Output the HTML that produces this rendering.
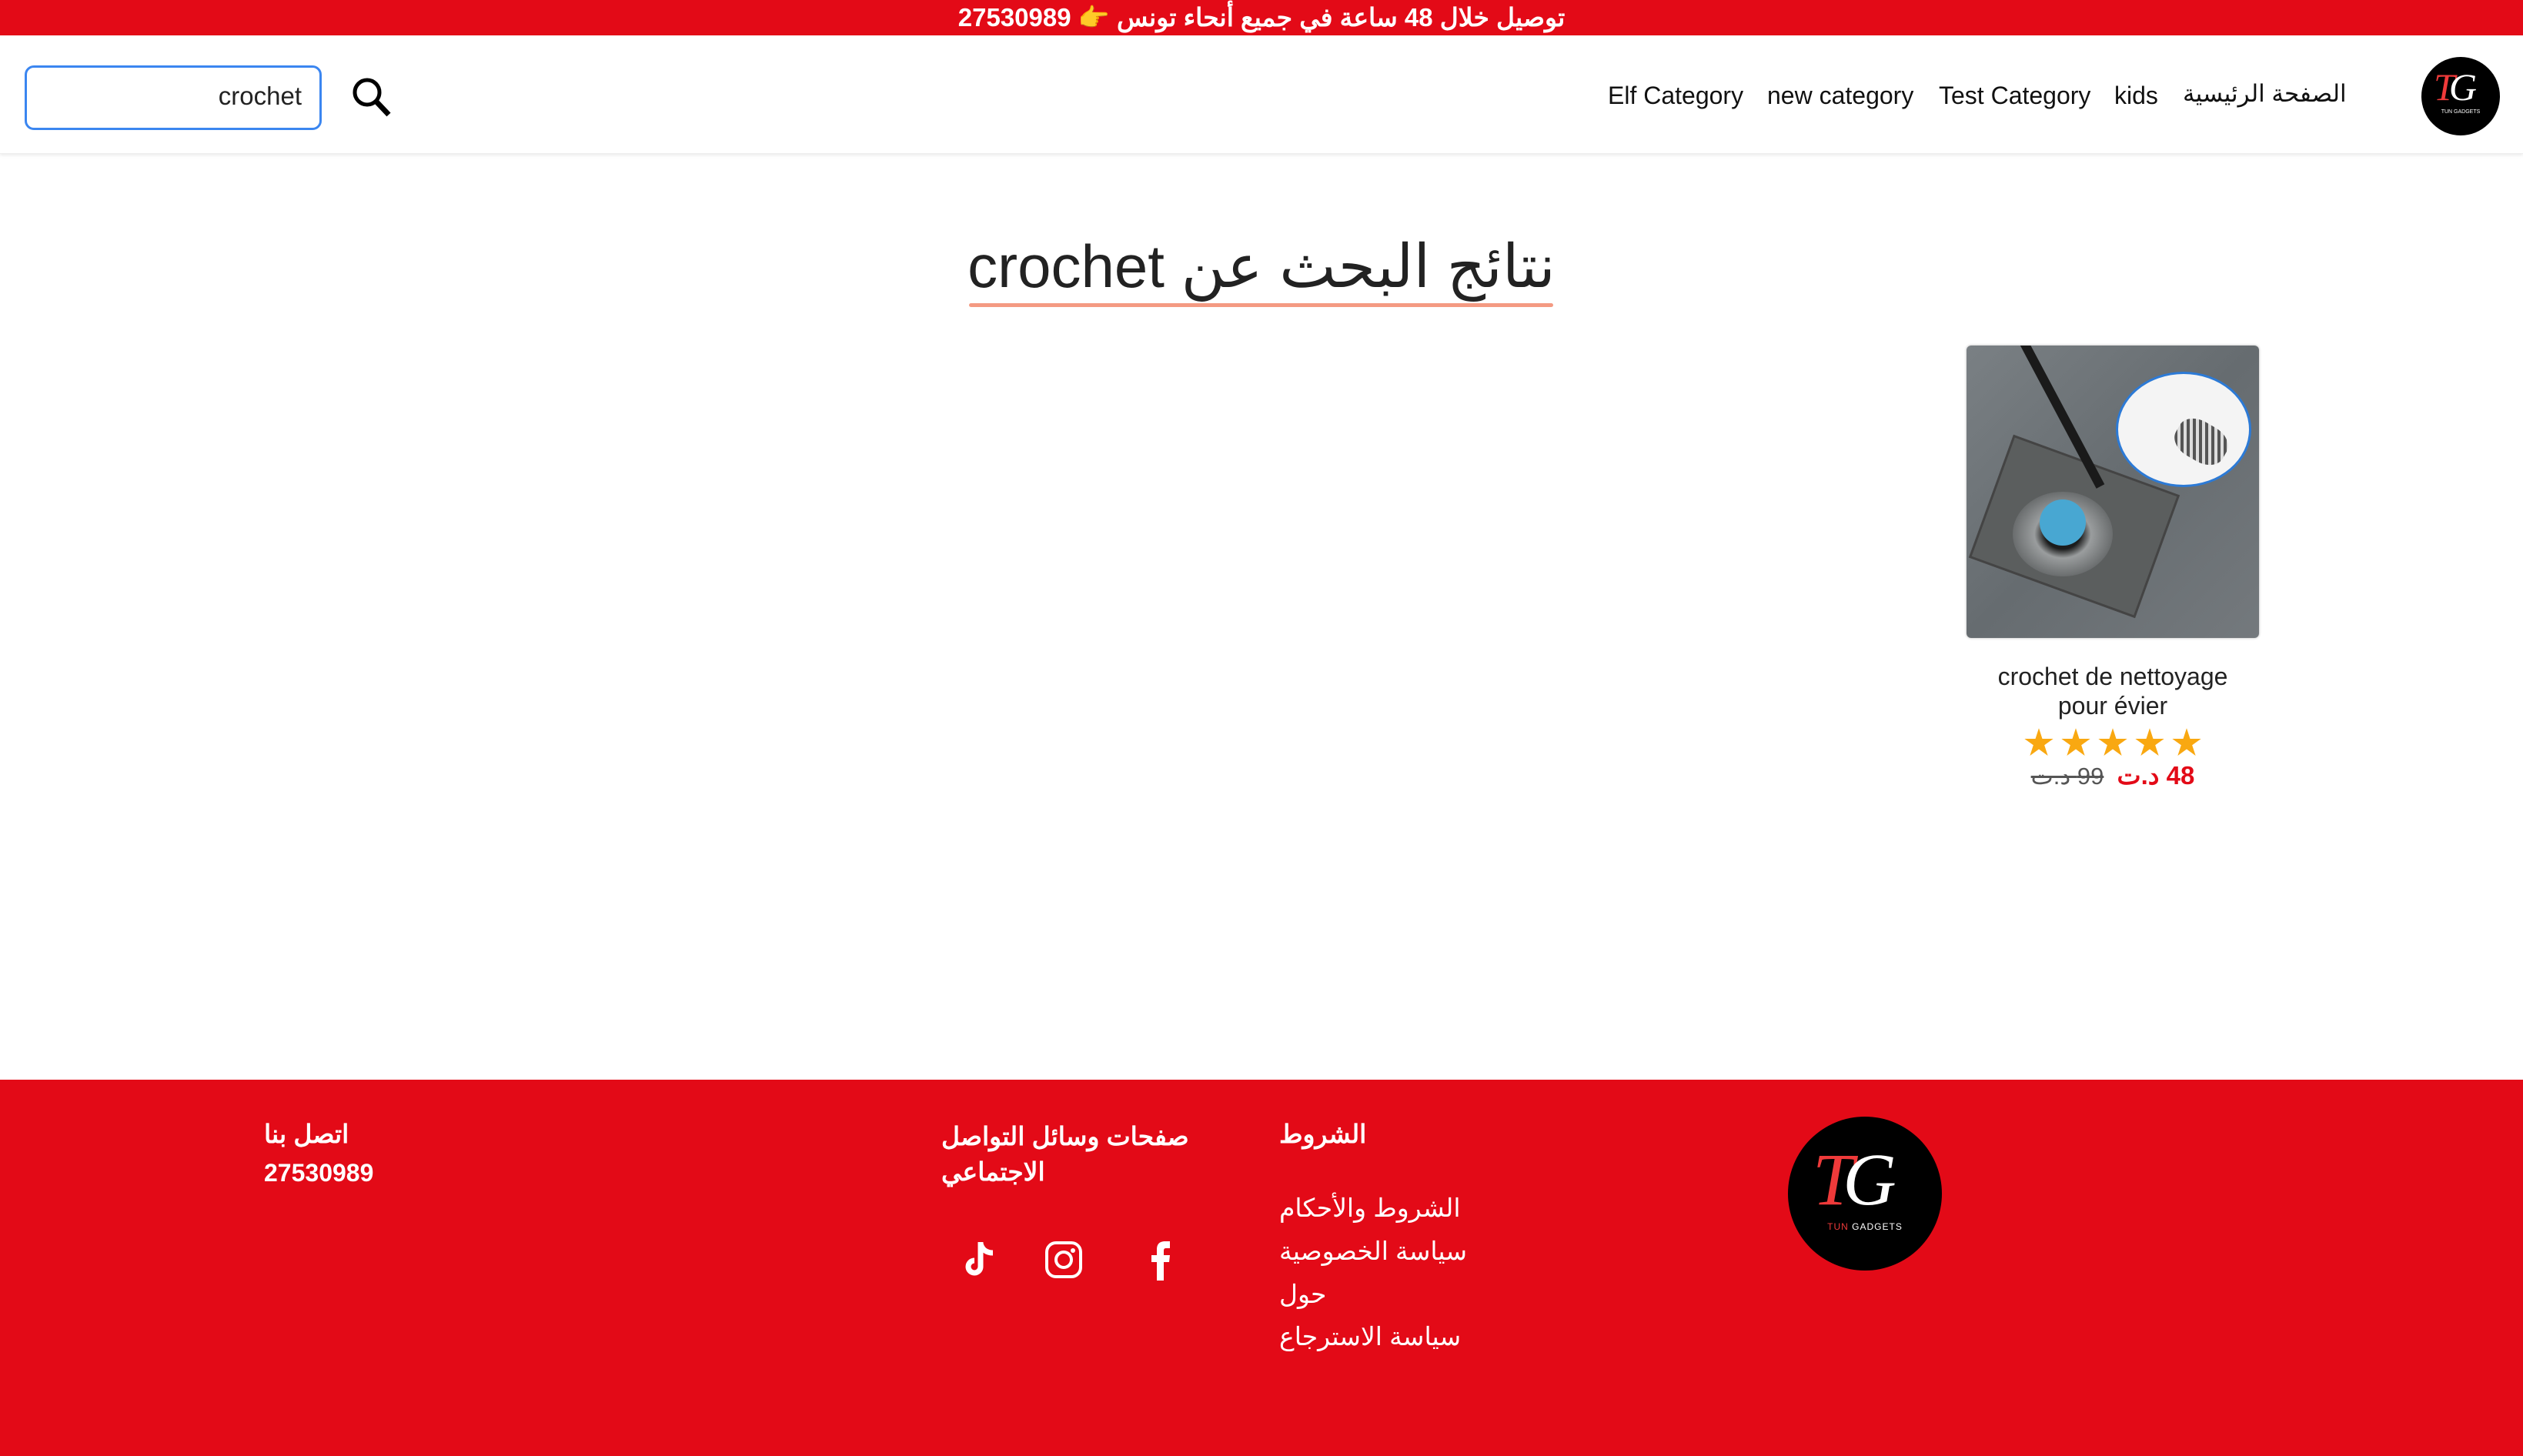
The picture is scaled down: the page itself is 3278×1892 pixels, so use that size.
<!DOCTYPE html>
<html><head><meta charset="utf-8"><style>
*{margin:0;padding:0;box-sizing:border-box}
body{width:3278px;height:1892px;position:relative;background:#fff;font-family:"Liberation Sans","Noto Sans CJK SC",sans-serif;overflow:hidden;color:#222}
.a{position:absolute;white-space:nowrap}
.red{background:#e30a17}
.logo{position:absolute;border-radius:50%;background:#000;overflow:hidden}
</style></head><body>
<div class="a red" style="left:0;top:0;width:3278px;height:46px"></div>
<div class="a" style="left:0;width:3278px;top:2px;text-align:center;color:#fff;font-weight:bold;font-size:33px;line-height:42px" dir="rtl">توصيل خلال 48 ساعة في جميع أنحاء تونس 👉 27530989</div>

<div class="a" style="left:0;top:46px;width:3278px;height:154px;box-shadow:0 2px 4px rgba(0,0,0,0.08);border-bottom:1px solid #eee"></div>
<div class="a" style="left:32px;top:85px;width:386px;height:84px;border:3px solid #3b86f0;border-radius:12px"></div>
<div class="a" style="left:200px;width:192px;text-align:right;top:106px;font-size:33px;color:#222">crochet</div>
<svg class="a" style="left:455px;top:98px" width="56" height="56" viewBox="0 0 56 56"><circle cx="22" cy="22" r="16" fill="none" stroke="#000" stroke-width="5"/><path d="M33 33L50 51" stroke="#000" stroke-width="7"/></svg>

<div class="a" style="left:2089px;top:106px;font-size:32px;color:#111">Elf Category</div>
<div class="a" style="left:2296px;top:106px;font-size:32px;color:#111">new category</div>
<div class="a" style="left:2519px;top:106px;font-size:32px;color:#111">Test Category</div>
<div class="a" style="left:2747px;top:106px;font-size:32px;color:#111">kids</div>
<div class="a" style="left:2836px;top:104px;font-size:31px;color:#111" dir="rtl">الصفحة الرئيسية</div>

<div class="logo" style="left:3146px;top:74px;width:102px;height:102px">
<div class="a" style="left:16px;top:10px;font-family:'Liberation Serif',serif;font-style:italic;font-size:50px;color:#ef3a3a">T<span style="color:#fff;margin-left:-8px">G</span></div>
<div class="a" style="left:0;width:102px;text-align:center;top:68px;font-size:7px;color:#fff">TUN GADGETS</div></div>

<div class="a" style="left:0;width:3278px;top:298px;text-align:center;font-size:78px;color:#222;line-height:96px" dir="rtl">نتائج البحث عن crochet</div>
<div class="a" style="left:1259px;top:394px;width:759px;height:5px;background:#f49a82;border-radius:3px"></div>

<div class="a" style="left:2555px;top:449px;width:380px;height:380px;border-radius:6px;overflow:hidden;background:linear-gradient(135deg,#7a8084,#666c70 50%,#74797d);box-shadow:0 0 3px rgba(0,0,0,.3)">
<div class="a" style="left:25px;top:150px;width:230px;height:170px;background:#5b5e5e;transform:rotate(20deg);border:3px solid #444"></div>
<div class="a" style="left:60px;top:190px;width:130px;height:110px;border-radius:50%;background:radial-gradient(#1b1c1c 25%,#9a9d9e 40%,#6b6e6f 70%)"></div>
<div class="a" style="left:95px;top:200px;width:60px;height:60px;border-radius:50%;background:#48a7d2"></div>
<div class="a" style="left:60px;top:-20px;width:12px;height:230px;background:#1a1a1a;transform:rotate(-28deg);transform-origin:top"></div>
<div class="a" style="left:194px;top:34px;width:176px;height:150px;border-radius:50%;background:#f4f4f4;border:3px solid #2c7ad6"></div>
<div class="a" style="left:270px;top:100px;width:70px;height:50px;border-radius:40%;background:repeating-linear-gradient(60deg,#555 0 4px,#ddd 4px 8px);transform:rotate(30deg)"></div>
</div>
<div class="a" style="left:2555px;width:380px;text-align:center;top:860px;font-size:32px;line-height:38px;color:#222;white-space:normal">crochet de nettoyage<br>pour évier</div>
<div class="a" style="left:2555px;width:380px;text-align:center;top:933px;font-size:40px;color:#f9a811;letter-spacing:8px;padding-left:8px">★★★★★</div>
<div class="a" style="left:2555px;width:380px;text-align:center;top:988px;font-size:31px"><span style="color:#555;text-decoration:line-through" dir="rtl">99 د.ت</span>&nbsp;&nbsp;<span style="color:#e30a17;font-weight:bold;font-size:33px" dir="rtl">48 د.ت</span></div>

<div class="a red" style="left:0;top:1403px;width:3278px;height:489px"></div>
<div class="logo" style="left:2323px;top:1451px;width:200px;height:200px">
<div class="a" style="left:32px;top:26px;font-family:'Liberation Serif',serif;font-style:italic;font-size:96px;color:#ef3a3a">T<span style="color:#fff;margin-left:-14px">G</span></div>
<div class="a" style="left:0;width:200px;text-align:center;top:136px;font-size:12px;color:#fff;letter-spacing:1px"><span style="color:#ef3a3a">TUN</span> GADGETS</div></div>

<div class="a" style="left:1662px;top:1454px;font-size:33px;font-weight:bold;color:#fff" dir="rtl">الشروط</div>
<div class="a" style="left:1662px;top:1550px;font-size:33px;color:#fff" dir="rtl">الشروط والأحكام</div>
<div class="a" style="left:1662px;top:1606px;font-size:33px;color:#fff" dir="rtl">سياسة الخصوصية</div>
<div class="a" style="left:1662px;top:1662px;font-size:33px;color:#fff" dir="rtl">حول</div>
<div class="a" style="left:1662px;top:1717px;font-size:33px;color:#fff" dir="rtl">سياسة الاسترجاع</div>

<div class="a" style="left:1223px;top:1454px;font-size:33px;font-weight:bold;color:#fff;line-height:46px;text-align:left" dir="rtl">صفحات وسائل التواصل<br>الاجتماعي</div>
<svg class="a" style="left:1252px;top:1612px" width="44" height="50" viewBox="0 0 44 50"><path d="M22 2v32a8 8 0 1 1-8-8" fill="none" stroke="#fff" stroke-width="7"/><path d="M22 4c2 8 8 12 16 12" fill="none" stroke="#fff" stroke-width="7"/></svg>
<svg class="a" style="left:1357px;top:1612px" width="50" height="50" viewBox="0 0 50 50"><rect x="3" y="3" width="44" height="44" rx="12" fill="none" stroke="#fff" stroke-width="4"/><circle cx="25" cy="25" r="10" fill="none" stroke="#fff" stroke-width="4"/><circle cx="37" cy="13" r="3" fill="#fff"/></svg>
<svg class="a" style="left:1495px;top:1612px" width="26" height="52" viewBox="0 0 26 52"><path d="M8 52V28H1v-9h7v-7C8 4 12 1 19 1h6v9h-5c-2 0-3 1-3 3v6h8l-1 9h-7v24z" fill="#fff"/></svg>

<div class="a" style="left:343px;top:1454px;font-size:33px;font-weight:bold;color:#fff" dir="rtl">اتصل بنا</div>
<div class="a" style="left:343px;top:1506px;font-size:32px;font-weight:bold;color:#fff">27530989</div>
</body></html>
